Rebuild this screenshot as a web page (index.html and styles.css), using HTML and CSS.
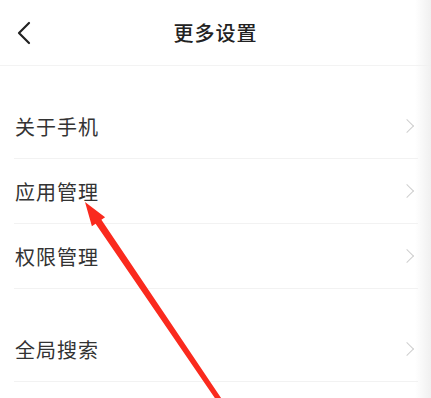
FILE: index.html
```html
<!DOCTYPE html>
<html>
<head>
    <meta charset="utf-8">
    <link rel="stylesheet" href="styles.css">
</head>
<body>

<div class="page">
    <div class="header">
        <svg class="back" width="16" height="24" viewBox="0 0 16 24">
            <polyline points="12,2 2,12 12,22" fill="none" stroke="#222" stroke-width="2.2" stroke-linecap="round" stroke-linejoin="round"/>
        </svg>
        <div class="title">更多设置</div>
    </div>

    <div class="group">
        <div class="row"><span class="label">关于手机</span><span class="chev"></span></div>
        <div class="row"><span class="label">应用管理</span><span class="chev"></span></div>
        <div class="row"><span class="label">权限管理</span><span class="chev"></span></div>
    </div>

    <div class="group">
        <div class="row"><span class="label">全局搜索</span><span class="chev"></span></div>
    </div>

    <svg class="pointer" width="431" height="398" viewBox="0 0 431 398">
        <polygon points="85,202 105.1,217.3 101.4,219.8 228.2,408.6 224,411.4 95.6,223.8 91.9,226.3" fill="#fa2a1e"/>
    </svg>
</div>

</body>
</html>
```

FILE: styles.css
```css
body {
    margin: 0;
    padding: 0;
    background: white;
    font-family: "Noto Sans CJK SC", "Noto Sans", sans-serif;
}
.page {
    position: relative;
    width: 431px;
    height: 398px;
    overflow: hidden;
    background: white;
}
.page::after {
    content: "";
    position: absolute;
    top: 0;
    right: 0;
    width: 16px;
    height: 100%;
    background: linear-gradient(to right, rgba(240,240,240,0), #f0f0f0);
}
.header {
    position: relative;
    height: 65px;
    border-bottom: 1px solid #f3f3f3;
    display: flex;
    align-items: center;
    justify-content: center;
}
.back {
    position: absolute;
    left: 17px;
    top: 21px;
}
.title {
    font-size: 20px;
    color: #222;
    font-weight: 500;
    letter-spacing: 1px;
}
.group {
    margin-top: 28px;
}
.row {
    height: 64px;
    margin: 0 13px 0 14px;
    border-bottom: 1px solid #f2f2f2;
    display: flex;
    align-items: center;
    justify-content: space-between;
}
.label {
    font-size: 20px;
    color: #333;
    letter-spacing: 1px;
    margin-left: 1px;
}
.chev {
    width: 9px;
    height: 9px;
    border-top: 1.5px solid #cfcfcf;
    border-right: 1.5px solid #cfcfcf;
    transform: rotate(45deg);
    margin-right: 6px;
}
.pointer {
    position: absolute;
    top: 0;
    left: 0;
}
```
